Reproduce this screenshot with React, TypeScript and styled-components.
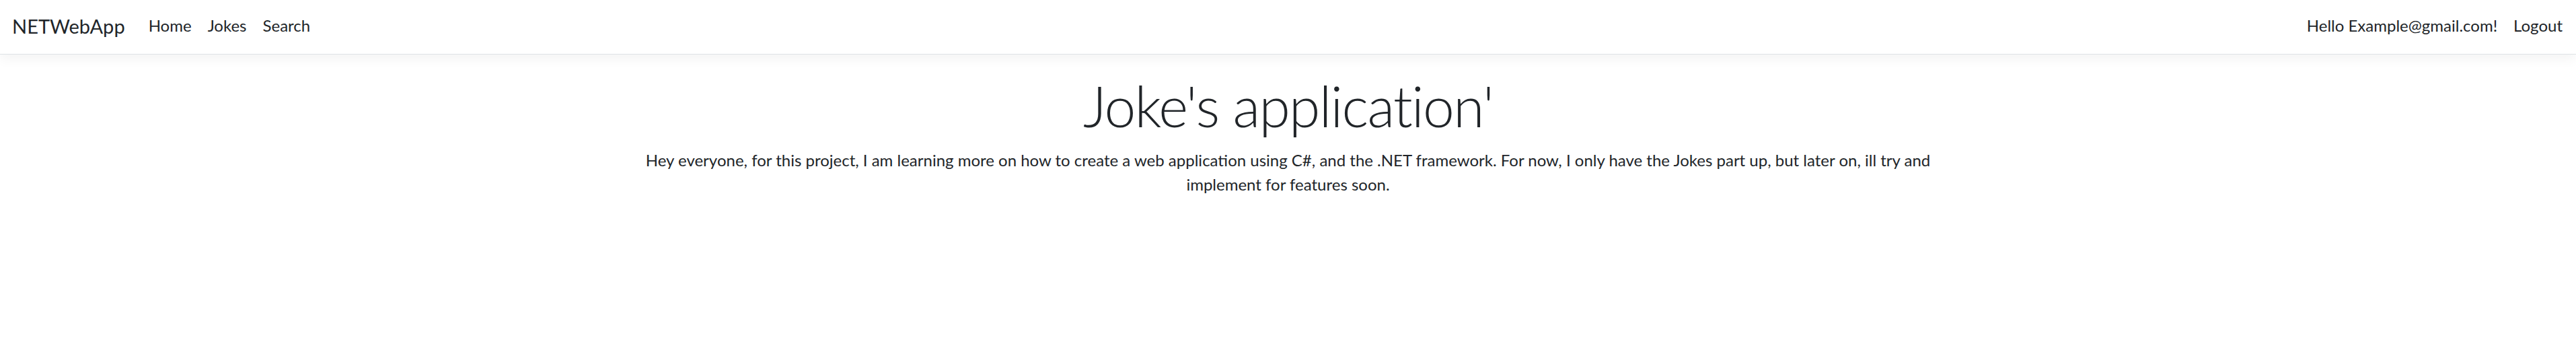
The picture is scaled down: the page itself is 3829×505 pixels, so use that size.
import styled, { createGlobalStyle } from 'styled-components';

const GlobalStyle = createGlobalStyle`
  html, body {
    margin: 0;
    padding: 0;
    background: #fff;
  }

  body {
    font-family: 'Lato', 'Liberation Sans', sans-serif;
    font-size: 24px;
    line-height: 1.5;
    color: #212529;
  }

  * {
    box-sizing: border-box;
  }
`;

const navLinks = ['Home', 'Jokes', 'Search'];

export default function App() {
  return (
    <>
      <GlobalStyle />
      <Header>
        <Navbar>
          <NavGroup>
            <Brand href="#">NETWebApp</Brand>
            <NavList>
              {navLinks.map((link) => (
                <li key={link}>
                  <NavLink href="#">{link}</NavLink>
                </li>
              ))}
            </NavList>
          </NavGroup>

          {/* Login partial */}
          <NavList>
            <li>
              <NavLink href="#">Hello Example@gmail.com!</NavLink>
            </li>
            <li>
              <LogoutButton type="button">Logout</LogoutButton>
            </li>
          </NavList>
        </Navbar>
      </Header>

      <Container>
        <Main>
          <TextCenter>
            <Title>Joke's application'</Title>
            <Intro>
              Hey everyone, for this project, I am learning more on how to create a web
              application using C#, and the .NET framework. For now, I only have the Jokes
              part up, but later on, ill try and implement for features soon.
            </Intro>
          </TextCenter>
        </Main>
      </Container>
    </>
  );
}

const Header = styled.header`
  margin-bottom: 26px;
`;

const Navbar = styled.nav`
  height: 81px;
  display: flex;
  align-items: center;
  justify-content: space-between;
  padding: 0 8px 4px 18px;
  background-color: #fff;
  border-bottom: 1px solid #dee2e6;
  box-shadow: 0 6px 18px rgba(0, 0, 0, 0.05);
`;

const NavGroup = styled.div`
  display: flex;
  align-items: center;
`;

const Brand = styled.a`
  font-size: 29px;
  line-height: 45px;
  margin-right: 23px;
  color: #212529;
  text-decoration: none;
  white-space: nowrap;
`;

const NavList = styled.ul`
  display: flex;
  align-items: center;
  list-style: none;
  margin: 0;
  padding: 0;
`;

const NavLink = styled.a`
  display: block;
  padding: 0 12px;
  font-size: 24px;
  line-height: 36px;
  color: #212529;
  text-decoration: none;
  white-space: nowrap;
`;

const button = styled.button`
  margin: 0;
  background: none;
  border: none;
  outline: none;
  cursor: pointer;
  font-family: inherit;
`;

const LogoutButton = styled(button)`
  display: block;
  padding: 0 12px;
  font-size: 24px;
  line-height: 36px;
  color: #212529;
`;

const Container = styled.div`
  width: 100%;
  max-width: 1980px;
  margin: 0 auto;
  padding: 0 18px;
`;

const Main = styled.main`
  padding-bottom: 24px;
`;

const TextCenter = styled.div`
  text-align: center;
`;

const Title = styled.h1`
  margin: 0 0 12px;
  font-size: 84px;
  font-weight: 300;
  line-height: 1.2;
  letter-spacing: -1.7px;
`;

const Intro = styled.p`
  margin: 0 0 24px;
`;
